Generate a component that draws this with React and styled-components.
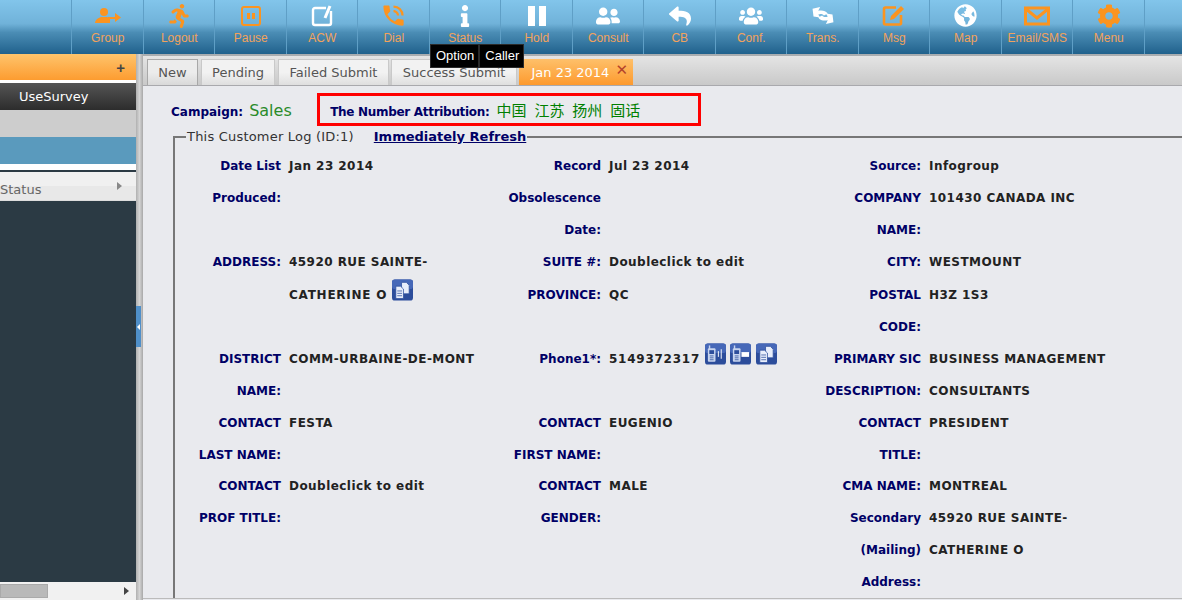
import React from 'react'
import styled, { createGlobalStyle } from 'styled-components'
import { FaRunning, FaInfo, FaUserFriends, FaReply, FaUsers, FaGlobeAmericas, FaCog } from 'react-icons/fa'
import { MdPhoneInTalk } from 'react-icons/md'

const orange = '#fb9420'

const GlobalStyle = createGlobalStyle`
  html, body { margin: 0; padding: 0; overflow: hidden; }
  body { font-family: "DejaVu Sans", Verdana, sans-serif; background: #e9eaee; }
`

const Page = styled.div`
  position: relative;
  width: 1182px;
  height: 600px;
  display: flex;
  flex-direction: column;
  overflow: hidden;
`

const TopBar = styled.div`
  height: 54px;
  flex: none;
  display: flex;
  padding-left: 71px;
  box-sizing: border-box;
  background: linear-gradient(#82c5eb 0%, #70b2d9 44%, #4b8db5 60%, #20618c 100%);
`

const NavItem = styled.div`
  width: 71.5px;
  height: 100%;
  flex: none;
  display: flex;
  flex-direction: column;
  align-items: center;
  padding-left: 1px;
  box-sizing: border-box;
  border-left: 1px solid #5f9fc6;
  font: 12px "Liberation Sans", Arial, sans-serif;
  color: #f2a25c;
`

const NavEnd = styled(NavItem)`
  width: 37px;
`

const NavIcon = styled.div`
  height: 29px;
  margin-top: 1px;
  display: flex;
  align-items: center;
  justify-content: center;
  color: ${props => (props.$white ? '#fff' : orange)};
`

const NavLabel = styled.div`
  line-height: 16px;
`

const Popover = styled.div`
  position: absolute;
  left: 430px;
  top: 44px;
  display: flex;
  height: 24px;
  background: #000;
  color: #fff;
  font: 13px "Liberation Sans", Arial, sans-serif;
  line-height: 22px;
  z-index: 5;
`

const PopoverItem = styled.div`
  padding: 0 4px 0 5px;
  border: 1px solid #2a2a2a;
  box-sizing: border-box;
`

const Body = styled.div`
  flex: 1;
  display: flex;
  min-height: 0;
`

const Sidebar = styled.div`
  width: 136px;
  flex: none;
  display: flex;
  flex-direction: column;
  background: #fff;
`

const SideHeader = styled.div`
  height: 26px;
  display: flex;
  align-items: center;
  justify-content: flex-end;
  padding-right: 11px;
  background: linear-gradient(#fec46c, #fd9c30);
  color: #444;
  font: bold 15px "Liberation Sans", Arial, sans-serif;
`

const SideTitle = styled.div`
  height: 27px;
  margin-top: 3px;
  padding-left: 19px;
  line-height: 27px;
  font-size: 13px;
  color: #fff;
  background: linear-gradient(#555, #2c2c2c);
`

const SideBlock = styled.div`
  height: 27px;
  background: ${props => props.$color};
`

const SideRule = styled.div`
  height: 2px;
  margin-top: 6px;
  background: #2b3a44;
`

const StatusRow = styled.div`
  height: 29px;
  display: flex;
  align-items: center;
  justify-content: space-between;
  padding: 6px 14px 0 0;
  box-sizing: border-box;
  font-size: 13px;
  color: #666;
  background: linear-gradient(#f0f0f0 50%, #e8e8e8 50%);
  border-bottom: 1px solid #ddd;
`

const Caret = styled.span`
  width: 0;
  height: 0;
  margin-top: ${props => props.$lift || 0}px;
  border-style: solid;
  border-width: 4px 0 4px 5px;
  border-color: transparent transparent transparent ${props => props.$color};
`

const SideDark = styled.div`
  flex: 1;
  background: #2b3a44;
`

const SideScroll = styled.div`
  height: 18px;
  display: flex;
  align-items: center;
  justify-content: space-between;
  padding-right: 7px;
  background: #f1f1f1;
`

const ScrollThumb = styled.div`
  width: 48px;
  height: 14px;
  background: #b9b9b9;
  border: 1px solid #aaa;
  box-sizing: border-box;
`

const Splitter = styled.div`
  width: 7px;
  flex: none;
  display: flex;
  align-items: flex-start;
  background: linear-gradient(90deg, #b0b0b0, #d4d4d4 50%, #a8a8a8);
`

const SplitHandle = styled.div`
  width: 5px;
  height: 41px;
  margin-top: 252px;
  display: flex;
  align-items: center;
  background: #4f8fc9;
`

const HandleArrow = styled.span`
  width: 0;
  height: 0;
  border-style: solid;
  border-width: 3px 3px 3px 0;
  border-color: transparent #fff transparent transparent;
  margin-left: 1px;
`

const Main = styled.div`
  flex: 1;
  min-width: 0;
  display: flex;
  flex-direction: column;
  margin-bottom: 1px;
  overflow: hidden;
  border-bottom: 1px solid #bbb;
`

const TabBar = styled.div`
  height: 32px;
  flex: none;
  display: flex;
  align-items: flex-end;
  gap: 2.8px;
  padding-left: 4px;
  box-sizing: border-box;
  border-top: 2px solid #a9adb0;
  border-bottom: 1px solid #a9a9ad;
  background: linear-gradient(#e4e4e4, #c9c9c9);
`

const Tab = styled.div`
  height: 26px;
  padding: 0 10.3px;
  display: flex;
  align-items: center;
  box-sizing: border-box;
  font-size: 13px;
  color: #555;
  border: 1px solid ${props => (props.$current ? '#a8a8a8' : '#c9c9c9')};
  border-bottom: none;
  background: ${props => (props.$current
    ? 'linear-gradient(#ececec, #ececec 50%, #d9d9d9)'
    : 'linear-gradient(#f2f2f2, #f2f2f2 50%, #dfdfdf)')};
`

const ActiveTab = styled.div`
  height: 26px;
  margin-left: 0;
  padding: 0 5px 0 12px;
  display: flex;
  align-items: center;
  gap: 6px;
  box-sizing: border-box;
  font-size: 13px;
  color: #fff;
  background: linear-gradient(#fec06a, #fd9a2e);
`

const TabClose = styled.span`
  color: #b5432a;
  font: 15px "Liberation Sans", "DejaVu Sans", sans-serif;
  margin-top: -4px;
`

const Content = styled.div`
  flex: 1;
  min-height: 0;
  padding-left: 30px;
  background: #e9eaee;
`

const CampaignRow = styled.div`
  height: 33px;
  display: flex;
  align-items: center;
  margin: 7px 0 0 -2px;
`

const Key = styled.b`
  padding-top: 5px;
  font-size: 12px;
  color: #000066;
  white-space: nowrap;
`

const AttributionKey = styled(Key)`
  letter-spacing: -0.3px;
`

const Campaign = styled.span`
  margin-left: 6px;
  padding-top: 2px;
  width: 68px;
  font-size: 16px;
  color: #2a8a2a;
`

const Attribution = styled.div`
  width: 384px;
  height: 33px;
  display: flex;
  align-items: center;
  gap: 7px;
  padding-left: 10px;
  box-sizing: border-box;
  border: 3px solid #f00;
`

const Place = styled.span`
  font: 15px "Noto Sans CJK SC", "DejaVu Sans", sans-serif;
  color: #008000;
  word-spacing: 4.5px;
`

const Log = styled.fieldset`
  margin: 3px -60px 0 0;
  padding: 0;
  border-style: solid;
  border-width: 2px 0 0 2px;
  border-color: #777;
`

const LogLegend = styled.legend`
  margin-left: 11px;
  padding: 0 1px;
  font-size: 13px;
  color: #333;
`

const LegendText = styled.span`
  letter-spacing: 0.2px;
`

const RefreshLink = styled.a`
  margin-left: 20px;
  font-weight: bold;
  color: #000066;
  text-decoration: underline;
`

const Columns = styled.div`
  display: grid;
  grid-template-columns: repeat(3, 320px);
  margin-top: 6px;
`

const Column = styled.div`
  display: flex;
  flex-direction: column;
`

const Field = styled.div`
  display: grid;
  grid-template-columns: 106px 1fr;
  column-gap: 8px;
  margin-top: ${props => props.$nudge || 0}px;
  font-size: 12px;
  font-weight: bold;
`

const Line = styled.div`
  height: 32px;
  line-height: 32px;
`

const Label = styled.div`
  text-align: right;
  color: #000066;
  white-space: nowrap;
`

const Value = styled.div`
  color: #222;
  white-space: nowrap;
  letter-spacing: 0.45px;
`

const Wide = styled.span`
  letter-spacing: 0.75px;
`

const ToolIcon = styled.svg`
  width: 21px;
  height: 22px;
  margin-left: 4.5px;
  vertical-align: top;
`

const Tile = ({ children }) => (
  <ToolIcon viewBox="0 0 22 22">
    <rect width="22" height="22" rx="3" fill="#2c4d9b" />
    <rect width="22" height="10" rx="3" fill="#4668b8" />
    {children}
  </ToolIcon>
)

const CopyMark = () => (
  <g fill="#e8eefb" stroke="#2c4d9b" strokeWidth="0.8">
    <path d="M10 3h5l3 3v9h-8z" />
    <path d="M4 7h5l3 3v10H4z" />
    <path d="M5.5 12h5M5.5 14.5h5M5.5 17h5" fill="none" />
  </g>
)

const PhoneMark = ({ children }) => (
  <g>
    <rect x="3" y="5" width="8" height="14" rx="1" fill="#c7d4ee" />
    <rect x="4.5" y="7" width="5" height="4" fill="#2c4d9b" />
    <rect x="4" y="2" width="1.5" height="4" fill="#c7d4ee" />
    <path d="M5 13h4M5 15h4M5 17h4" stroke="#2c4d9b" strokeWidth="0.8" />
    {children}
  </g>
)

const GroupIcon = () => (
  <svg width="26" height="18" viewBox="0 0 26 18" fill="currentColor">
    <circle cx="9" cy="5" r="4" />
    <path d="M0 16c0-3 3-5 6-6h6c1 .5 2 1 3 2v4z" />
    <path d="M13 10h7V6l6 4.5-6 4.500v-3h-7z" />
  </svg>
)

const PauseIcon = () => (
  <svg width="20" height="20" viewBox="0 0 20 20" fill="none" stroke="currentColor" strokeWidth="2">
    <rect x="1" y="1" width="18" height="18" rx="2" />
    <path d="M7.500 7v6M12.500 7v6" strokeWidth="3" />
  </svg>
)

const AcwIcon = () => (
  <svg width="23" height="22" viewBox="0 0 23 22" fill="none" stroke="currentColor" strokeWidth="2.4">
    <path d="M15 3H4a2 2 0 0 0-2 2v13a2 2 0 0 0 2 2h14a2 2 0 0 0 2-2V6" />
    <path d="M19 1l-5 12" strokeWidth="3" />
  </svg>
)

const HoldIcon = () => (
  <svg width="18" height="20" viewBox="0 0 18 20" fill="currentColor">
    <rect width="7" height="20" />
    <rect x="11" width="7" height="20" />
  </svg>
)

const TransIcon = () => (
  <svg width="24" height="19" viewBox="0 0 24 20" fill="currentColor">
    <path d="M1 3l8-2-2 4c4-1 8 0 10 3l-4 2c-2-2-4-2-6-1l2 3-7-1z" />
    <path d="M1 3l8-2-2 4c4-1 8 0 10 3l-4 2c-2-2-4-2-6-1l2 3-7-1z" transform="rotate(180 12 10)" />
  </svg>
)

const MsgIcon = () => (
  <svg width="24" height="22" viewBox="0 0 24 22" fill="none" stroke="currentColor" strokeWidth="2.6">
    <path d="M14 2.500H3.500a1.500 1.500 0 0 0-1.500 1.500v14a1.500 1.500 0 0 0 1.500 1.500h14a1.500 1.500 0 0 0 1.500-1.500V10" />
    <path d="M8 15l1-4L19 1l3 3-10 10z" fill="currentColor" stroke="none" />
  </svg>
)

const MailIcon = () => (
  <svg width="26" height="20" viewBox="0 0 26 20" fill="none" stroke="currentColor" strokeWidth="3">
    <rect x="1.500" y="2" width="23" height="16" />
    <path d="M2 3l11 9L24 3" />
  </svg>
)

const navItems = [
  { label: 'Group', icon: <GroupIcon /> },
  { label: 'Logout', icon: <FaRunning size={24} /> },
  { label: 'Pause', icon: <PauseIcon /> },
  { label: 'ACW', icon: <AcwIcon />, white: true },
  { label: 'Dial', icon: <MdPhoneInTalk size={27} /> },
  { label: 'Status', icon: <FaInfo size={22} />, white: true },
  { label: 'Hold', icon: <HoldIcon />, white: true },
  { label: 'Consult', icon: <FaUserFriends size={24} />, white: true },
  { label: 'CB', icon: <FaReply size={22} />, white: true },
  { label: 'Conf.', icon: <FaUsers size={24} />, white: true },
  { label: 'Trans.', icon: <TransIcon />, white: true },
  { label: 'Msg', icon: <MsgIcon /> },
  { label: 'Map', icon: <FaGlobeAmericas size={23} />, white: true },
  { label: 'Email/SMS', icon: <MailIcon /> },
  { label: 'Menu', icon: <FaCog size={24} /> },
]

const Lines = ({ items }) => items.map((line, i) => <Line key={i}>{line}</Line>)

const columns = [
  [
    { label: ['Date List'], value: ['Jan 23 2014'] },
    { label: ['Produced:', ''], value: [''] },
    { label: ['ADDRESS:'], value: ['45920 RUE SAINTE-'] },
    { nudge: 1, label: ['', ''], value: [<><Wide>CATHERINE O</Wide><Tile><CopyMark /></Tile></>] },
    { label: ['DISTRICT', 'NAME:'], value: ['COMM-URBAINE-DE-MONT'] },
    { label: ['CONTACT', 'LAST NAME:'], value: ['FESTA'] },
    { nudge: -1, label: ['CONTACT', 'PROF TITLE:'], value: ['Doubleclick to edit'] },
  ],
  [
    { label: ['Record'], value: ['Jul 23 2014'] },
    { label: ['Obsolescence', 'Date:'], value: [''] },
    { label: ['SUITE #:'], value: ['Doubleclick to edit'] },
    { nudge: 1, label: ['PROVINCE:', ''], value: ['QC'] },
    {
      label: ['Phone1*:', ''],
      value: [
        <>
          <Wide>5149372317</Wide>
          <Tile><PhoneMark><path d="M14 8v6M17 6v10" stroke="#fff" /></PhoneMark></Tile>
          <Tile><PhoneMark><rect x="12" y="9" width="8" height="5" fill="#fff" /></PhoneMark></Tile>
          <Tile><CopyMark /></Tile>
        </>,
      ],
    },
    { label: ['CONTACT', 'FIRST NAME:'], value: ['EUGENIO'] },
    { nudge: -1, label: ['CONTACT', 'GENDER:'], value: ['MALE'] },
  ],
  [
    { label: ['Source:'], value: ['Infogroup'] },
    { label: ['COMPANY', 'NAME:'], value: ['101430 CANADA INC'] },
    { label: ['CITY:'], value: ['WESTMOUNT'] },
    { nudge: 1, label: ['POSTAL', 'CODE:'], value: ['H3Z 1S3'] },
    { label: ['PRIMARY SIC', 'DESCRIPTION:'], value: ['BUSINESS MANAGEMENT', 'CONSULTANTS'] },
    { label: ['CONTACT', 'TITLE:'], value: ['PRESIDENT'] },
    { nudge: -1, label: ['CMA NAME:'], value: ['MONTREAL'] },
    { label: ['Secondary', '(Mailing)', 'Address:'], value: ['45920 RUE SAINTE-', 'CATHERINE O'] },
  ],
]

const App = () => (
  <Page>
    <GlobalStyle />
    <TopBar>
      {navItems.map(item => (
        <NavItem key={item.label}>
          <NavIcon $white={item.white}>{item.icon}</NavIcon>
          <NavLabel>{item.label}</NavLabel>
        </NavItem>
      ))}
      <NavEnd />
    </TopBar>
    <Popover>
      <PopoverItem>Option</PopoverItem>
      <PopoverItem>Caller</PopoverItem>
    </Popover>
    <Body>
      <Sidebar>
        <SideHeader>+</SideHeader>
        <SideTitle>UseSurvey</SideTitle>
        <SideBlock $color="#cdcdcd" />
        <SideBlock $color="#5a9abd" />
        <SideRule />
        <StatusRow>
          Status
          <Caret $color="#888" $lift={-6} />
        </StatusRow>
        <SideDark />
        <SideScroll>
          <ScrollThumb />
          <Caret $color="#444" />
        </SideScroll>
      </Sidebar>
      <Splitter>
        <SplitHandle><HandleArrow /></SplitHandle>
      </Splitter>
      <Main>
        <TabBar>
          <Tab $current>New</Tab>
          <Tab>Pending</Tab>
          <Tab>Failed Submit</Tab>
          <Tab>Success Submit</Tab>
          <ActiveTab>Jan 23 2014<TabClose>✕</TabClose></ActiveTab>
        </TabBar>
        <Content>
          <CampaignRow>
            <Key>Campaign:</Key>
            <Campaign>Sales</Campaign>
            <Attribution>
              <AttributionKey>The Number Attribution:</AttributionKey>
              <Place>中国 江苏 扬州 固话</Place>
            </Attribution>
          </CampaignRow>
          <Log>
            <LogLegend>
              <LegendText>This Customer Log (ID:1)</LegendText>
              <RefreshLink>Immediately Refresh</RefreshLink>
            </LogLegend>
            <Columns>
              {columns.map((fields, c) => (
                <Column key={c}>
                  {fields.map((field, f) => (
                    <Field key={f} $nudge={field.nudge}>
                      <Label><Lines items={field.label} /></Label>
                      <Value><Lines items={field.value} /></Value>
                    </Field>
                  ))}
                </Column>
              ))}
            </Columns>
          </Log>
        </Content>
      </Main>
    </Body>
  </Page>
)

export default App
